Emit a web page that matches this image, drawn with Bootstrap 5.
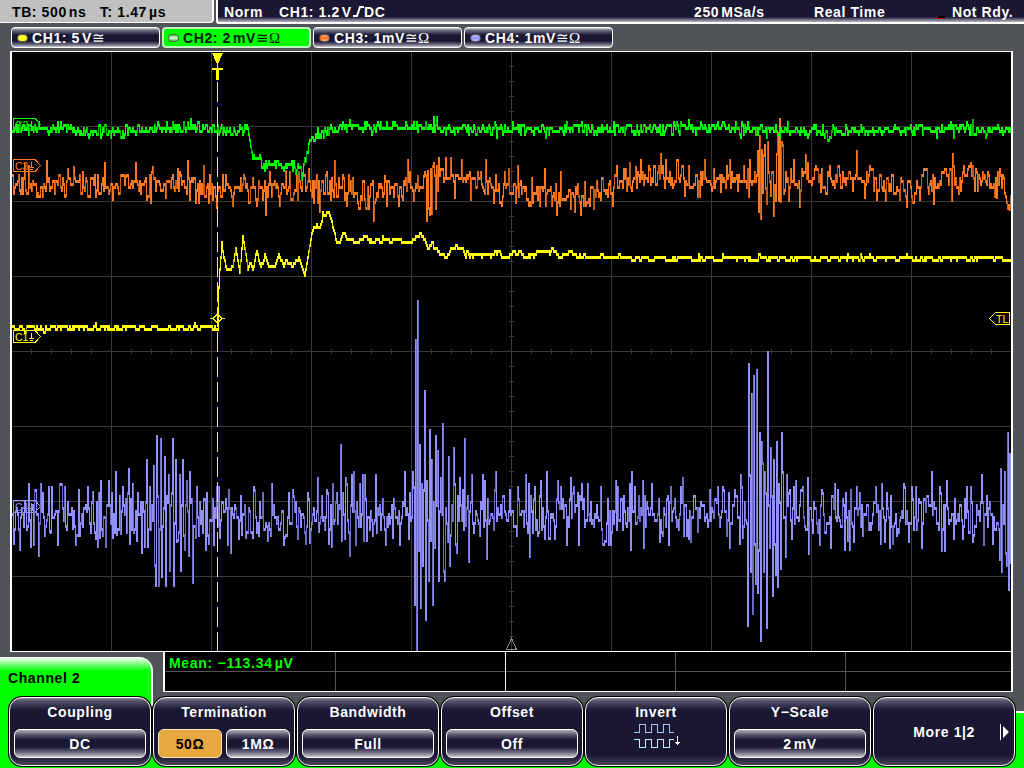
<!DOCTYPE html>
<html lang="en">
<head>
    <meta charset="UTF-8">
    <meta name="viewport" content="width=device-width, initial-scale=1.0">
    <link href="https://cdn.jsdelivr.net/npm/bootstrap@5.3.0/dist/css/bootstrap.min.css" rel="stylesheet">
    <title>Oscilloscope</title>
    <style>
        body {
            width: 1024px;
            height: 768px;
            overflow: hidden;
            background-color: #505458;
            color: white;
            font-family: "Liberation Sans", Arial, sans-serif;
            font-weight: bold;
            font-size: 14px;
            line-height: 16px;
            letter-spacing: 0.6px;
            white-space: nowrap;
        }
        svg {
            display: block;
        }
        /* top status bar */
        .status-bar {
            height: 24px;
        }
        .timebase {
            width: 214px;
            height: 23px;
            padding: 4px 0 0 12px;
            background-color: #c0c0c0;
            color: black;
            border-right: 2px solid white;
            border-bottom: 1px solid white;
            border-bottom-right-radius: 4px;
        }
        .timebase span:first-child {
            width: 88px;
        }
        .status {
            margin-left: 2px;
            padding: 4px 0 0 6px;
            background: linear-gradient(#1a1733 17px, #5d5a70 19px, #b9b8c2 22px, white 22px);
            border-left: 2px solid white;
            border-bottom-left-radius: 3px;
        }
        .thin {
            margin-left: 2px;
        }
        /* channel buttons */
        .channel-row {
            height: 27px;
            padding: 3px 0 0 11px;
            gap: 2px;
        }
        .channel {
            width: 149px;
            height: 21px;
            padding-left: 5px;
            border: 1px solid white;
            border-radius: 4px;
            background: linear-gradient(#d8d8dd, #77758a 2px, #1a1733 7px, #1a1733 13px, #77758a 17px, #d0d0d8);
        }
        .channel.selected {
            background: #00ff00;
            border: 2px solid #bff5bf;
            padding-left: 4px;
            color: #002000;
        }
        .lamp {
            width: 11px;
            height: 8px;
            margin-right: 4px;
            border: 1px solid #555;
            border-radius: 4px;
        }
        .sym {
            font-family: "Liberation Serif", "DejaVu Serif", serif;
            font-weight: normal;
            font-size: 15px;
            letter-spacing: 0;
        }
        /* screen */
        .screen {
            width: 1003px;
            height: 601px;
            margin-left: 10px;
            background-color: black;
            border: solid white;
            border-width: 1px 2px;
        }
        .measure {
            width: 850px;
            height: 40px;
            margin-left: 10px;
            background-color: black;
            border: solid white;
            border-width: 0 2px 1px 2px;
            color: #00ff00;
            letter-spacing: 0.7px;
        }
        .measure .cell-box {
            width: 170px;
            flex-shrink: 0;
            border-right: 1px solid #555;
        }
        .measure .cell-box:first-child {
            width: 171px;
        }
        .measure .cell-box:nth-child(2) {
            border-right-color: white;
        }
        .measure .cell-box:last-child {
            width: 165px;
            border-right: 0;
        }
        .measure .cell-box div {
            height: 20px;
            padding: 3px 0 0 4px;
            border-bottom: 1px solid #555;
        }
        .tab-title {
            width: 153px;
            height: 40px;
            margin-top: 5px;
            padding: 13px 0 0 8px;
            color: black;
            background: linear-gradient(white, #00ff00 14px);
            border-top-right-radius: 14px;
            border-right: 2px solid white;
        }
        /* softkeys */
        .softkeys {
            height: 76px;
            background:
                linear-gradient(#00ff00, #00ff00) 0 0 / 9px 100% no-repeat,
                linear-gradient(#505458 18px, white 18px, white 20px, #00ff00 20px);
        }
        .tab-side {
            width: 153px;
            height: 13px;
            margin-right: -145px;
            background-color: #00ff00;
            border-right: 2px solid white;
        }
        .key-row {
            padding-top: 3px;
            z-index: 1;
        }
        .key-shell {
            width: 144px;
            height: 71px;
            padding: 1px;
            background-color: black;
            border-radius: 14px;
        }
        .softkey {
            width: 142px;
            height: 69px;
            padding: 6px 4px 0;
            border: 1.5px solid white;
            border-radius: 13px;
            background: linear-gradient(#8c8a99, #55536a 3px, #1a1733 12px, #1a1733 57px, #45435a);
            text-align: center;
        }
        .value-box {
            height: 29px;
            margin-top: 9px;
            padding-top: 6px;
            border: 1.5px solid white;
            border-radius: 6px;
            background: linear-gradient(#b5b4bf, #55536a 5px, #1a1733 10px, #1a1733 17px, #77758a 23px, #c5c4ce);
        }
        .value-box.chosen {
            background: #e8a840;
            color: black;
            border-color: #ffe9c4;
        }
    </style>
</head>
<body>

    <div class="status-bar d-flex">
        <div class="timebase d-flex">
            <span>TB: 500<span class="thin">ns</span></span>
            <span>T: 1.47<span class="thin">µs</span></span>
        </div>
        <div class="status d-flex flex-grow-1">
            <span style="width: 55px">Norm</span>
            <span style="width: 74px">CH1: 1.2<span class="thin">V</span></span>
            <svg width="11" height="14" fill="none" stroke="white" stroke-width="2">
                <path d="M0 12H4L7 3H11"/>
            </svg>
            <span style="width: 330px">DC</span>
            <span style="width: 120px">250<span class="thin">MSa/s</span></span>
            <span style="width: 123px">Real Time</span>
            <svg width="8" height="16" style="margin-right: 7px">
                <rect y="12" width="8" height="3" fill="#c00000"/>
                <rect x="1" y="12" width="7" height="2" fill="black"/>
            </svg>
            <span>Not Rdy.</span>
        </div>
    </div>

    <div class="channel-row d-flex">
        <div class="channel d-flex align-items-center">
            <i class="lamp" style="background-color: #ffff20"></i>CH1: 5<span class="thin">V</span><span class="sym">≅</span>
        </div>
        <div class="channel selected d-flex align-items-center">
            <i class="lamp" style="background: linear-gradient(#4c4, #dfd, #4c4)"></i>CH2: 2<span class="thin">mV</span><span class="sym">≅Ω</span>
        </div>
        <div class="channel d-flex align-items-center">
            <i class="lamp" style="background: linear-gradient(#ffb070, #ff7018, #ffb070)"></i>CH3: 1<span>mV</span><span class="sym">≅Ω</span>
        </div>
        <div class="channel d-flex align-items-center">
            <i class="lamp" style="background: linear-gradient(#c0c0ff, #9090ff, #c0c0ff)"></i>CH4: 1<span>mV</span><span class="sym">≅Ω</span>
        </div>
    </div>

    <div class="screen">
        <svg width="999" height="599" viewBox="12 52 999 599" shape-rendering="crispEdges">
            <g id="grid" fill="#393939"></g>
            <path d="M511.500 638.500L506.500 649.500H516.500Z" fill="none" stroke="#888"/>
            <g id="flags" fill="none" font-family="Liberation Sans, Arial, sans-serif" font-size="11" font-weight="normal" letter-spacing="0.5"></g>
            <g id="traces"></g>
            <path d="M217.500 57V651" stroke="#ffff00" stroke-dasharray="20 5" stroke-dashoffset="0"/>
            <path d="M212 53H223L218 64H217Z" fill="#ffff00"/>
            <path d="M212 68H223V70H219V80H216V70H212Z" fill="#ffff00"/>
            <path d="M210 318.500H213M222 318.500H225M217.500 314L222 318.500L217.500 323L213 318.500Z" fill="none" stroke="#ffff00"/>
            <path d="M1009.500 312.500H995.500L989.500 318.500L995.500 324.500H1009.500Z" fill="none" stroke="#ffff00"/>
            <text x="996" y="322.500" fill="#ffff00" font-size="10.500" font-weight="normal" letter-spacing="0" font-family="Liberation Sans, Arial, sans-serif">TL</text>
        </svg>
    </div>

    <div class="d-flex" style="height: 41px">
        <div class="tab-title">Channel 2</div>
        <div class="measure d-flex">
            <div class="cell-box"><div>Mean: −113.34<span class="thin">µV</span></div></div>
            <div class="cell-box"><div></div></div>
            <div class="cell-box"><div></div></div>
            <div class="cell-box"><div></div></div>
            <div class="cell-box"><div></div></div>
        </div>
    </div>

    <div class="softkeys d-flex">
        <div class="tab-side"></div>
        <div class="key-row d-flex">
            <div class="key-shell">
                <div class="softkey">Coupling<div class="value-box">DC</div></div>
            </div>
            <div class="key-shell">
                <div class="softkey">Termination
                    <div class="d-flex gap-1">
                        <div class="value-box chosen w-50">50Ω</div>
                        <div class="value-box w-50">1MΩ</div>
                    </div>
                </div>
            </div>
            <div class="key-shell">
                <div class="softkey">Bandwidth<div class="value-box">Full</div></div>
            </div>
            <div class="key-shell">
                <div class="softkey">Offset<div class="value-box">Off</div></div>
            </div>
            <div class="key-shell">
                <div class="softkey">Invert
                    <svg class="mx-auto" width="48" height="28" viewBox="-2 0 48 28" overflow="visible" fill="none" shape-rendering="crispEdges">
                        <path d="M0 12.500H5.500V4.500H11.500V12.500H17.500V4.500H23.500V12.500H29.500V4.500H35.500V12.500H40" stroke="#a9c4f0"/>
                        <path d="M0 19.500H5.500V27.500H11.500V19.500H17.500V27.500H23.500V19.500H29.500V27.500H35.500V19.500H40" stroke="#c4ecff"/>
                        <path d="M43.500 16V25M41 22.500H46M42 23.500H45" stroke="white"/>
                    </svg>
                </div>
            </div>
            <div class="key-shell">
                <div class="softkey">Y−Scale<div class="value-box">2<span class="thin">mV</span></div></div>
            </div>
            <div class="key-shell">
                <div class="softkey d-flex align-items-center justify-content-end pt-0">
                    <span style="margin-right: 25px">More 1|2</span>
                    <svg width="10" height="16" fill="white"><path d="M0 0H1V16H0ZM3 2L9 8L3 14Z"/></svg>
                </div>
            </div>
        </div>
    </div>

    <script src="https://cdn.jsdelivr.net/npm/bootstrap@5.3.0/dist/js/bootstrap.bundle.min.js"></script>
    <script>
        const LEFT = 12, RIGHT = 1010;

        // Graticule: 10 x 8 divisions with minor ticks on the centre axes
        let grid = '';
        for (let x = 111; x < RIGHT; x += 100) grid += `<rect x="${x}" y="52" width="1" height="599"/>`;
        for (let y = 126; y < 650; y += 75) grid += `<rect x="12" y="${y}" width="999" height="1"/>`;
        for (let x = 31; x < RIGHT; x += 20) grid += `<rect x="${x}" y="349" width="1" height="5"/>`;
        for (let y = 66; y < 650; y += 15) grid += `<rect x="509" y="${y}" width="5" height="1"/>`;
        document.getElementById('grid').innerHTML = grid;

        // Channel position flags
        const flags = [['C2', 118, '#00ff00'], ['C3', 159, '#ff7820'], ['C1', 330, '#ffff00'], ['C4', 500, '#9090ff']];
        document.getElementById('flags').innerHTML = flags.map(([name, y, color]) => `
            <path d="M13.500 ${y + .5}H35L40.500 ${y + 6.500}L35 ${y + 12.500}H13.500Z M31.500 ${y + 3}V${y + 8} M29 ${y + 8.500}H34 M30 ${y + 10.500}H33" stroke="${color}"/>
            <text x="15" y="${y + 10.500}" fill="${color}" font-size="10.500" letter-spacing="0">${name}</text>`).join('');

        let seed = 7;
        function rnd() {
            seed = (seed * 16807) % 2147483647;
            return seed / 2147483647;
        }
        function noise() {
            return rnd() + rnd() + rnd() - 1.5;
        }
        function interpolate(points, x) {
            let i = 1;
            while (i < points.length - 1 && points[i][0] < x) i++;
            const [x0, y0] = points[i - 1], [x1, y1] = points[i];
            const t = Math.min(1, Math.max(0, (x - x0) / (x1 - x0)));
            return y0 + (y1 - y0) * t;
        }
        function pairs(text) {
            return text.trim().split(/\s+/).map(p => p.split(',').map(Number));
        }

        // One column per sample, filled between the previous and the current level
        function drawTrace({ shape, peaks, amp, hold, offset, color, dim }) {
            const fixed = new Map(peaks);
            let prev = null, value = 0, bright = '', dark = '';
            for (let x = LEFT; x <= RIGHT; x++) {
                if (rnd() > hold) value = noise() * amp;
                let y = interpolate(shape, x) + value;
                y = Math.round((y - offset) / 3) * 3 + offset;
                if (fixed.has(x)) y = fixed.get(x);
                if (prev === null) prev = y;
                const top = Math.min(prev, y) - 1, bottom = Math.min(651, Math.max(prev, y) + 2);
                const col = `M${x} ${top}h1V${bottom}h-1z`;
                if (bottom - top > 8 && rnd() < 0.3) dark += col; else bright += col;
                prev = y;
            }
            return `<path d="${dark}" fill="${dim}"/><path d="${bright}" fill="${color}"/>`;
        }

        const purplePeaks = pairs(`
            13,543 19,549 28,484 30,546 34,490 38,555 40,484 44,535 48,487 49,531 51,487 64,487 66,529 72,528 78,490 87,487
            90,532 92,492 97,546 98,493 99,537 105,546 108,481 112,537 115,472 116,534 120,533 122,487 128,469 129,543 132,484
            136,540 137,493 141,552 144,546 146,460 147,546 149,487 153,466 154,565 155,585 156,436 158,585 160,439 161,576
            164,457 165,585 168,475 169,570 172,439 173,585 175,460 177,540 179,475 180,570 182,460 184,549 186,481 188,555
            189,472 192,582 195,537 196,487 205,549 208,543 216,487 219,537 228,490 230,552 240,496 241,534 245,537 252,537
            253,487 267,540 271,484 284,537 288,493 292,490 305,543 309,542 317,478 318,531 326,490 328,543 331,546 332,484
            340,445 341,540 345,478 344,538 349,555 351,475 353,472 355,544 359,484 362,475 363,540 364,475 366,540 375,475
            376,532 385,544 392,537 404,472 408,538 409,493 412,472 413,487 414,604 415,340 416,651 417,301 418,550 419,445
            420,607 421,484 422,565 423,490 424,391 425,619 426,481 428,580 429,430 430,540 431,460 432,604 434,547 435,436
            437,451 438,580 440,478 442,424 443,571 444,580 448,457 449,565 453,448 454,484 455,544 456,552 459,478 463,529
            464,439 465,525 468,561 471,475 473,532 479,535 482,475 484,481 486,558 493,529 495,472 517,487 516,535 525,475
            528,484 529,556 534,487 538,532 540,481 544,538 546,472 549,538 554,538 557,481 560,487 566,544 570,478 573,487
            578,544 581,484 587,484 600,487 608,544 610,544 615,481 616,529 617,487 629,484 630,549 631,472 634,487 642,481
            643,547 651,484 659,541 662,535 682,478 686,535 688,538 697,531 709,490 717,487 723,490 728,493 729,547 734,490
            739,543 740,475 742,537 747,625 748,364 749,475 750,571 751,394 752,613 753,376 754,544 755,583 756,370 757,592
            758,550 759,433 760,640 761,442 762,463 763,571 764,472 765,493 766,627 767,352 769,547 770,448 772,595 773,460
            775,574 776,442 777,586 778,484 780,568 781,433 782,472 785,556 786,475 789,490 791,538 793,487 795,481 802,487
            807,478 808,553 819,544 822,493 830,547 834,484 837,490 844,549 845,493 847,540 849,549 850,490 875,487 881,484
            880,543 886,493 892,543 904,487 908,541 911,487 915,487 921,547 931,472 940,493 941,550 944,550 946,481 970,487
            972,541 981,475 986,496 992,543 999,559 1000,469 1001,571 1004,472 1005,553 1006,565 1007,433 1008,589 1009,454 1010,562`);

        const orangePeaks = pairs(`
            13,193 20,193 24,163 36,196 46,161 54,193 65,195 67,169 73,167 95,196 104,163 112,199 125,176 135,163 146,199
            152,167 165,197 177,169 187,161 195,202 203,166 208,202 209,175 216,207 225,175 232,205 243,175 255,199 265,214
            269,172 279,205 285,171 296,175 308,169 312,181 319,211 326,172 334,161 343,178 346,205 358,208 367,187 373,220
            380,184 384,176 386,205 398,205 407,160 413,200 417,176 423,176 426,220 427,171 428,208 429,214 430,169 431,213
            432,166 433,163 435,208 436,166 438,158 445,158 450,158 454,197 461,160 470,199 485,160 501,205 508,169 517,166
            528,205 539,205 544,169 556,214 560,172 574,211 580,214 584,182 593,208 612,205 623,169 635,167 653,166 660,154
            665,160 684,195 704,160 697,196 720,191 737,190 757,151 758,211 759,136 760,218 761,150 762,192 763,155 764,145
            765,188 766,203 767,142 770,195 771,172 773,215 774,185 775,200 776,154 777,133 778,200 779,119 780,201 781,142
            782,145 788,200 793,160 799,206 805,155 820,191 829,166
            856,151 864,197 885,200 906,206 919,199 933,203 945,169 951,200 952,154 970,163 996,197 999,169 1007,208 1009,209`);

        const orangeShape = pairs(`12,186 60,184 100,181 170,183 215,192 260,189 300,188 345,188 375,198 400,182 425,186
            440,176 465,178 500,188 540,192 578,199 620,180 660,176 700,180 740,178 760,178 785,182 800,178 830,180 860,180
            900,187 940,182 975,178 990,183 1000,182 1010,203`);

        const yellowShape = pairs(`12,327.5 217,327.5 218,285 219,268 221,241 225,268 229,270 232,268 235,250 239,270 242,238
            247,268 250,262 252,270 256,251 260,268 264,255 268,266 274,265 278,253 283,267 286,260 292,266 294,260 298,257
            304,275 306,262 310,235 313,227 315,225 320,227 322,212 328,212 332,225 336,241 339,242 343,233 348,239 361,242
            364,236 369,242 376,240 400,240 404,242 411,242 418,233 424,242 428,248 432,243 440,254 446,254 450,248 458,247
            464,253 468,255 495,254 498,251 501,257 507,257 512,252 516,255 519,251 524,256 532,256 536,252 552,251 560,255
            572,251 580,257 620,257.5 1010,258.2`);

        const greenShape = pairs(`12,128 60,129 85,132 120,130 180,127 230,129 248,131 250,148 253,157 259,158 263,165
            285,166 303,169 306,155 308,142 315,136 325,134 330,128 360,128 380,126 430,126 440,129 560,129 650,129 700,127
            760,129 820,131 900,129 1010,129`);

        document.getElementById('traces').innerHTML =
            drawTrace({ shape: [[12, 514], [1010, 516]], peaks: purplePeaks, amp: 25, hold: 0.1, offset: 1, color: '#9090ff', dim: '#6c6cc0' }) +
            drawTrace({ shape: yellowShape, peaks: [], amp: 2.6, hold: 0.45, offset: 2, color: '#ffff00', dim: '#b0b000' }) +
            drawTrace({ shape: orangeShape, peaks: orangePeaks, amp: 14, hold: 0.2, offset: 1, color: '#ff7820', dim: '#c05c18' }) +
            drawTrace({ shape: greenShape, peaks: pairs('172,122 190,119 301,179 349,120 433,117 436,117 496,137 688,120 972,120'), amp: 6, hold: 0.1, offset: 2, color: '#00ff00', dim: '#00b800' });
    </script>
</body>
</html>
